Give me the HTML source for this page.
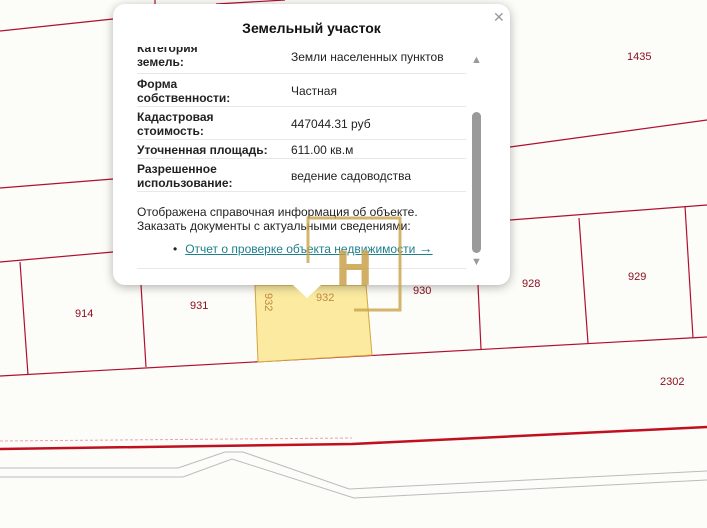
<!DOCTYPE html>
<html><head><meta charset="utf-8"><style>
body{margin:0;width:707px;height:528px;overflow:hidden;background:#fcfcf8;font-family:"Liberation Sans",sans-serif;position:relative}
svg{position:absolute;left:0;top:0}
.pop{position:absolute;left:113px;top:4px;width:397px;height:281px;background:#fff;border-radius:12px;box-shadow:0 2px 10px rgba(0,0,0,.3)}
.ptr{position:absolute;left:292px;top:284px;width:0;height:0;border-left:15px solid transparent;border-right:15px solid transparent;border-top:14px solid #fff}
.t{position:absolute;left:0;width:397px;top:16px;text-align:center;font-weight:bold;font-size:14px;color:#111}
.x{position:absolute;left:380px;top:5px;font-size:14px;color:#999}
.scroll{position:absolute;left:24px;top:43px;width:329px;height:147px;overflow:hidden}
.row{position:absolute;left:0;width:329px;border-bottom:1px solid #e8e8e8;font-size:12px;line-height:14px;color:#222}
.row .l{position:absolute;left:0;font-weight:bold;color:#222}
.row .v{position:absolute;left:154px}
.p{position:absolute;left:24px;top:201px;font-size:12px;line-height:14px;color:#222}
.li{position:absolute;left:60px;top:236px;font-size:12px;color:#222}
.li a{color:#1d7f8c;text-decoration:underline;margin-left:8px}
.sb{position:absolute;left:359px;top:108px;width:9px;height:141px;border-radius:5px;background:#9a9a9a}
.wm{z-index:5}
</style></head><body>
<svg width="707" height="528">
<g stroke="#b01030" stroke-width="1.2" fill="none">
<line x1="0" y1="31" x2="113" y2="19"/><line x1="155" y1="0" x2="155" y2="4"/><line x1="216" y1="4" x2="285" y2="0"/>
<line x1="0" y1="188" x2="113" y2="179"/><line x1="0" y1="262" x2="113" y2="252"/>
<line x1="510" y1="147" x2="707" y2="120"/><line x1="510" y1="220" x2="707" y2="205"/>
<line x1="0" y1="376" x2="707" y2="337"/>
<line x1="20" y1="262" x2="28" y2="375"/><line x1="141" y1="285" x2="146" y2="367"/>
<line x1="478" y1="285" x2="481" y2="349"/><line x1="579" y1="218" x2="588" y2="343"/><line x1="685" y1="206" x2="693" y2="338"/>
</g>
<polygon points="255,285 258,362 372,355 366,285" fill="#fbeaa0" stroke="#d4a640" stroke-width="1"/>
<line x1="0" y1="441" x2="352" y2="438" stroke="#f0a0b0" stroke-dasharray="3,2"/>
<polyline points="0,449 352,444 707,427" stroke="#c01020" stroke-width="2.5" fill="none"/>
<polyline points="0,468 178,468 225,452 243,452 349,489 707,471" stroke="#bbb" fill="none"/>
<polyline points="0,477 183,477 232,459 354,498 707,480" stroke="#bbb" fill="none"/>
<g font-size="11" fill="#8b1020" font-family="Liberation Sans">
<text x="627" y="60">1435</text><text x="75" y="317">914</text><text x="190" y="309">931</text>
<text x="413" y="294">930</text><text x="522" y="287">928</text><text x="628" y="280">929</text><text x="660" y="385">2302</text>
<text x="316" y="301" fill="#c08a40">932</text>
<text x="265" y="293" fill="#c08a40" transform="rotate(90 265 293)">932</text>
</g>
</svg>
<div class="pop">
<div class="t">Земельный участок</div>
<div class="x">✕</div>
<div class="scroll">
<div class="row" style="top:-6px;height:32px"><div class="l">Категория<br>земель:</div><div class="v" style="top:9px">Земли населенных пунктов</div></div>
<div class="row" style="top:27px;height:32px"><div class="l" style="top:3px">Форма<br>собственности:</div><div class="v" style="top:10px">Частная</div></div>
<div class="row" style="top:60px;height:32px"><div class="l" style="top:3px">Кадастровая<br>стоимость:</div><div class="v" style="top:10px">447044.31 руб</div></div>
<div class="row" style="top:93px;height:18px"><div class="l" style="top:3px">Уточненная площадь:</div><div class="v" style="top:3px">611.00 кв.м</div></div>
<div class="row" style="top:112px;height:32px"><div class="l" style="top:3px">Разрешенное<br>использование:</div><div class="v" style="top:10px">ведение садоводства</div></div>
</div>
<div class="p">Отображена справочная информация об объекте.<br>Заказать документы с актуальными сведениями:</div>
<div class="li">•<a>Отчет о проверке объекта недвижимости <span style="font-size:14px">→</span></a></div>
<div style="position:absolute;left:24px;top:264px;width:329px;border-top:1px solid #e8e8e8"></div>
<div class="sb"></div>
<div style="position:absolute;left:358px;top:50px;font-size:11px;color:#999">▲</div>
<div style="position:absolute;left:358px;top:252px;font-size:11px;color:#999">▼</div>
</div>
<div class="ptr"></div>
<svg class="wm" width="707" height="528">
<g stroke="#c9a24a" stroke-width="3" fill="none" opacity=".8">
<polyline points="308,263 308,218 400,218 400,310 354,310"/>
</g>
<text x="336" y="285" font-size="50" font-weight="bold" fill="#c9a24a" opacity=".85" font-family="Liberation Sans">H</text>
</svg>
</body></html>
